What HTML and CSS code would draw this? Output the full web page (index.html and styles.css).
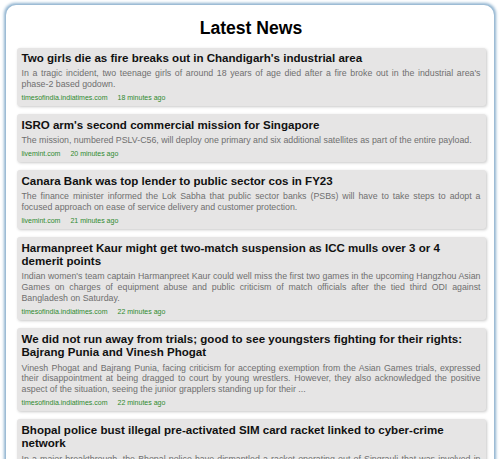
FILE: index.html
```html
<!DOCTYPE html>
<html lang="en">
<head>
<meta charset="utf-8">
<title>Latest News</title>
<link rel="stylesheet" href="styles.css">
</head>
<body>
<div class="container">
  <h1 class="heading">Latest News</h1>
  <div class="list">
    <article class="card">
      <h2 class="title">Two girls die as fire breaks out in Chandigarh's industrial area</h2>
      <p class="desc">In a tragic incident, two teenage girls of around 18 years of age died after a fire broke out in the industrial area's <span class="nowrap">phase-2</span> based godown.</p>
      <div class="meta"><span class="source">timesofindia.indiatimes.com</span><span class="time">18 minutes ago</span></div>
    </article>
    <article class="card">
      <h2 class="title">ISRO arm's second commercial mission for Singapore</h2>
      <p class="desc">The mission, numbered PSLV-C56, will deploy one primary and six additional satellites as part of the entire payload.</p>
      <div class="meta"><span class="source">livemint.com</span><span class="time">20 minutes ago</span></div>
    </article>
    <article class="card">
      <h2 class="title">Canara Bank was top lender to public sector cos in FY23</h2>
      <p class="desc">The finance minister informed the Lok Sabha that public sector banks (PSBs) will have to take steps to adopt a focused approach on ease of service delivery and customer protection.</p>
      <div class="meta"><span class="source">livemint.com</span><span class="time">21 minutes ago</span></div>
    </article>
    <article class="card">
      <h2 class="title">Harmanpreet Kaur might get two-match suspension as ICC mulls over 3 or 4 demerit points</h2>
      <p class="desc">Indian women's team captain Harmanpreet Kaur could well miss the first two games in the upcoming Hangzhou Asian Games on charges of equipment abuse and public criticism of match officials after the tied third ODI against Bangladesh on Saturday.</p>
      <div class="meta"><span class="source">timesofindia.indiatimes.com</span><span class="time">22 minutes ago</span></div>
    </article>
    <article class="card">
      <h2 class="title">We did not run away from trials; good to see youngsters fighting for their rights: Bajrang Punia and Vinesh Phogat</h2>
      <p class="desc">Vinesh Phogat and Bajrang Punia, facing criticism for accepting exemption from the Asian Games trials, expressed their disappointment at being dragged to court by young wrestlers. However, they also acknowledged the positive aspect of the situation, seeing the junior grapplers standing up for their ...</p>
      <div class="meta"><span class="source">timesofindia.indiatimes.com</span><span class="time">22 minutes ago</span></div>
    </article>
    <article class="card">
      <h2 class="title">Bhopal police bust illegal pre-activated SIM card racket linked to cyber-crime network</h2>
      <p class="desc">In a major breakthrough, the Bhopal police have dismantled a racket operating out of Singrauli that was involved in supplying pre-activated SIM cards to cyber criminals across the country.</p>
      <div class="meta"><span class="source">timesofindia.indiatimes.com</span><span class="time">23 minutes ago</span></div>
    </article>
  </div>
</div>
</body>
</html>
```

FILE: styles.css
```css
html, body {
  margin: 0;
  padding: 0;
  background: #ffffff;
}

body {
  font-family: "Liberation Sans", Arial, sans-serif;
  padding: 5px 6px 5px 5.5px;
}

.container {
  background: #ffffff;
  border-radius: 10px;
  box-shadow: 0 0 3px 1.5px #8eb2cf;
  padding: 12px 8.5px 12px 11px;
}

.heading {
  margin: 0;
  font-size: 17.6px;
  line-height: 22px;
  font-weight: bold;
  text-align: center;
  color: #000;
}

.list {
  display: flex;
  flex-direction: column;
  gap: 8.3px;
  margin-top: 8.5px;
}

.card {
  background: #e6e5e5;
  border-radius: 3px;
  box-shadow: 1px 1px 3px rgba(0, 0, 0, 0.22);
  padding: 4.5px 5px 3.8px 5px;
}

.title {
  margin: 0;
  font-size: 11.55px;
  line-height: 13.5px;
  font-weight: bold;
  color: #111;
}

.desc {
  margin: 2.75px 0 0;
  font-size: 8.8px;
  line-height: 10.8px;
  color: #6f6f6f;
  text-align: justify;
}

.nowrap {
  white-space: nowrap;
}

.meta {
  display: flex;
  gap: 10px;
  margin-top: 3.4px;
  font-size: 7px;
  line-height: 9px;
  color: #2f8a2f;
}
```
